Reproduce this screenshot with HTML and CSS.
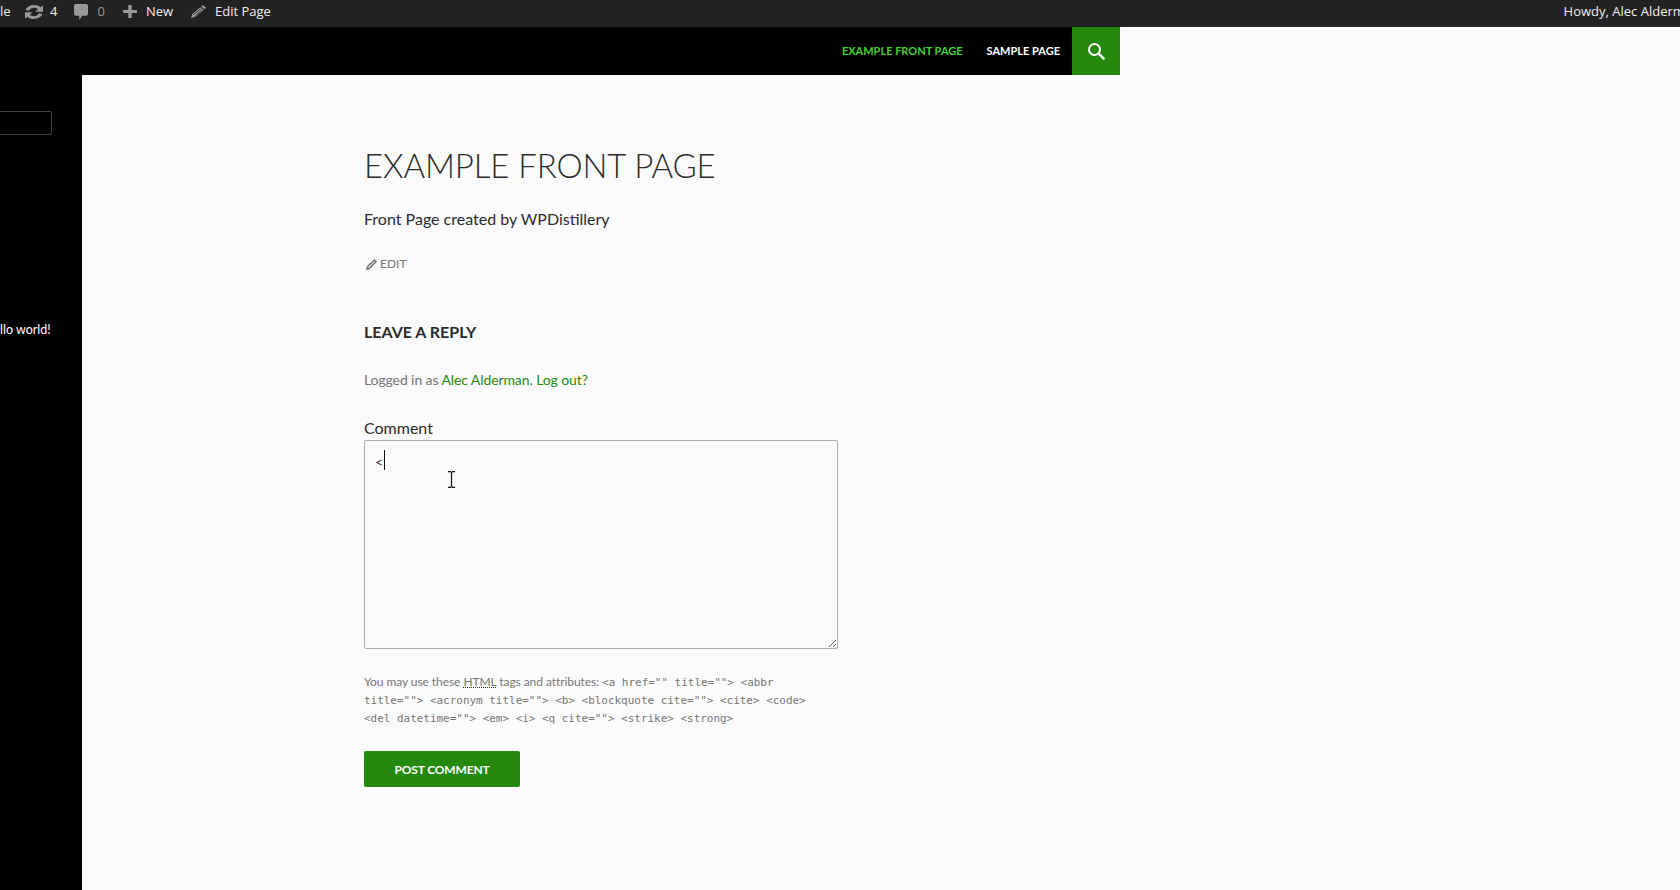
FILE: index.html
```html
<!DOCTYPE html>
<html lang="en">
<head>
  <meta charset="UTF-8">
  <title>Example Front Page</title>
  <link rel="stylesheet" href="styles.css">
</head>
<body>
  <div class="adminbar">
    <div class="adminbar-left">
      <a class="bar-item bar-site">le</a>
      <a class="bar-item bar-updates">
        <svg class="icon-updates" viewBox="2.800 3.300 14.400 13.400" preserveAspectRatio="none"><path d="M10.200 3.300c2 0 3.800.8 5 2.200l2-2v6.200h-6.200l2.300-2.300c-.8-.9-1.900-1.400-3.100-1.400-1.900 0-3.500 1.200-4.100 2.900L3.200 8c1-2.700 3.800-4.700 7-4.700zM2.800 10.300H9l-2.300 2.300c.8.900 1.900 1.400 3.100 1.400 1.900 0 3.500-1.200 4.100-2.900l2.900.9c-1 2.700-3.800 4.700-7 4.700-2 0-3.800-.8-5-2.200l-2 2v-6.200z"/></svg>
        4
      </a>
      <a class="bar-item bar-comments">
        <svg class="icon-comments" viewBox="2 3 16 15" preserveAspectRatio="none"><path d="M4 3h12c1.100 0 2 .9 2 2v7c0 1.100-.9 2-2 2h-4.500l-3.500 4v-4H4c-1.100 0-2-.9-2-2V5c0-1.100.9-2 2-2z"/></svg>
        0
      </a>
      <a class="bar-item bar-new">
        <svg class="icon-new" viewBox="3 3 14 14" preserveAspectRatio="none"><path d="M17 8.300v3.400h-5.300V17H8.300v-5.300H3V8.300h5.300V3h3.400v5.300z"/></svg>
        New
      </a>
      <a class="bar-item bar-edit">
        <svg class="icon-edit" viewBox="2 2 16 16" preserveAspectRatio="none"><path d="M14.600 2l3.400 3.400-1.700 1.700-3.400-3.400zM11.900 4.700l3.400 3.400-8.700 8.400L2 18l1.300-4.700z"/><path d="M5 13.800l7.500-7.500M6.800 15l7-7" stroke="#222" stroke-width=".9"/></svg>
        Edit Page
      </a>
    </div>
    <a class="bar-account">Howdy, Alec Alderman</a>
  </div>

  <div class="navbar">
    <ul class="nav-menu">
      <li><a class="current" href="#">Example Front Page</a></li>
      <li><a href="#">Sample Page</a></li>
    </ul>
    <button class="search-toggle">
      <svg viewBox="0 0 20 20" width="20" height="20"><circle cx="8.500" cy="8.500" r="5.500" fill="none" stroke="#fff" stroke-width="2"/><path d="M12.700 12.700l5 5" stroke="#fff" stroke-width="2.400" stroke-linecap="round"/></svg>
    </button>
  </div>

  <div class="page">
    <aside class="sidebar">
      <input class="sidebar-search" type="text">
      <a class="sidebar-link" href="#">llo world!</a>
    </aside>

    <main class="content">
      <h1 class="entry-title">Example Front Page</h1>
      <p class="entry-text">Front Page created by WPDistillery</p>
      <a class="edit-link" href="#">
        <svg viewBox="2 2 16 16" width="11" height="11"><path d="M14 3.500l2.500 2.500L7 15.500l-3.800 1.300L4.500 13z" fill="none" stroke="#767676" stroke-width="2.200"/><path d="M7 11.500l5-5M9 13l5-5" stroke="#767676" stroke-width="1.100"/></svg>
        Edit
      </a>

      <h3 class="reply-title">Leave a Reply</h3>
      <p class="logged-in">Logged in as <a href="#">Alec Alderman</a><a href="#">. Log out?</a></p>

      <form class="comment-form">
        <label class="comment-label" for="comment">Comment</label>
        <div class="comment-wrap">
          <textarea id="comment" class="comment-box">&lt;</textarea>
          <span class="text-caret"></span>
          <svg class="ibeam" viewBox="0 0 9 17" width="9" height="17"><path d="M1 .6h2.500l1 1 1-1H8M1 16.400h2.500l1-1 1 1H8M4.500 1.600v13.800" fill="none" stroke="#111" stroke-width="1.200"/></svg>
        </div>
        <p class="allowed-tags">You may use these <abbr title="HyperText Markup Language">HTML</abbr> tags and attributes: <code>&lt;a href="" title=""&gt; &lt;abbr title=""&gt; &lt;acronym title=""&gt; &lt;b&gt; &lt;blockquote cite=""&gt; &lt;cite&gt; &lt;code&gt; &lt;del datetime=""&gt; &lt;em&gt; &lt;i&gt; &lt;q cite=""&gt; &lt;strike&gt; &lt;strong&gt;</code></p>
        <button class="submit" type="button">Post Comment</button>
      </form>
    </main>
  </div>
</body>
</html>
```

FILE: styles.css
```css
html, body {
  height: 100%;
}
body {
  margin: 0;
  background: #fbfbfb;
  color: #2b2b2b;
  font-family: Lato, sans-serif;
  display: flex;
  flex-direction: column;
  overflow: hidden;
}
a {
  text-decoration: none;
  color: inherit;
}

.adminbar {
  height: 27px;
  flex: none;
  background: #222;
  color: #eee;
  font-family: "Open Sans", sans-serif;
  font-size: 13px;
  line-height: 23px;
  display: flex;
  justify-content: space-between;
  white-space: nowrap;
  overflow: hidden;
}
.adminbar-left {
  display: flex;
  align-items: flex-start;
}
.bar-item {
  display: flex;
  align-items: center;
  height: 23px;
}
.bar-item svg {
  fill: #999;
  flex: none;
  margin-right: 9px;
}
.bar-site {
  width: 25px;
}
.bar-updates {
  margin-right: 17px;
}
.icon-updates {
  width: 18px;
  height: 14px;
  margin-right: 7px !important;
}
.bar-comments {
  margin-right: 18px;
  color: #999;
}
.icon-comments {
  width: 14px;
  height: 16px;
}
.bar-new {
  margin-right: 18px;
}
.icon-new {
  width: 14px;
  height: 13px;
}
.icon-edit {
  width: 15px;
  height: 13px;
}
.bar-account {
  margin-left: auto;
  padding-left: 20px;
  margin-right: -20px;
}

.navbar {
  width: 1120px;
  height: 48px;
  flex: none;
  background: #000;
  display: flex;
  justify-content: flex-end;
}
.nav-menu {
  list-style: none;
  margin: 0;
  padding: 0;
  display: flex;
}
.nav-menu a {
  display: block;
  padding: 0 12px;
  color: #fff;
  font-size: 11px;
  font-weight: 700;
  line-height: 48px;
  text-transform: uppercase;
}
.nav-menu a.current {
  color: #41d12e;
}
.search-toggle {
  width: 48px;
  height: 48px;
  padding: 0;
  border: 0;
  background: #24890d;
  display: flex;
  align-items: center;
  justify-content: center;
}

.page {
  flex: 1;
  display: flex;
  min-height: 0;
}
.sidebar {
  width: 82px;
  flex: none;
  background: #000;
  color: #fff;
}
.sidebar-search {
  display: block;
  box-sizing: border-box;
  width: 152px;
  height: 24px;
  margin: 36px 0 0 -100px;
  border: 1px solid #444;
  border-radius: 2px;
  background: transparent;
}
.sidebar-link {
  display: block;
  margin-top: 186px;
  font-size: 12.500px;
  line-height: 18px;
}

.content {
  width: 474px;
  margin-left: 282px;
}
.entry-title {
  margin: 70px 0 0;
  font-size: 33px;
  font-weight: 300;
  line-height: 40px;
  letter-spacing: -0.12px;
  text-transform: uppercase;
  color: #2b2b2b;
}
.entry-text {
  margin: 22px 0 0;
  font-size: 16px;
  line-height: 24px;
}
.edit-link {
  display: flex;
  align-items: center;
  gap: 3px;
  margin: 24px 0 0 2px;
  color: #767676;
  font-size: 12px;
  line-height: 18px;
  text-transform: uppercase;
}
.reply-title {
  margin: 47px 0 0;
  font-size: 16px;
  font-weight: 700;
  line-height: 24px;
  text-transform: uppercase;
}
.logged-in {
  margin: 24px 0 0;
  color: #767676;
  font-size: 14px;
  line-height: 24px;
  letter-spacing: -0.1px;
}
.logged-in a {
  color: #24890d;
}
.comment-form {
  margin-top: 24px;
}
.comment-label {
  display: block;
  font-size: 16px;
  line-height: 24px;
}
.comment-wrap {
  position: relative;
  height: 209px;
}
.comment-box {
  display: block;
  box-sizing: border-box;
  width: 474px;
  height: 209px;
  margin: 0;
  padding: 9px 10px;
  border: 1px solid rgba(0,0,0,0.3);
  border-radius: 2px;
  background: #fbfbfb;
  color: #2b2b2b;
  font-family: Lato, sans-serif;
  font-size: 14px;
  line-height: 24px;
  outline: none;
}
.text-caret {
  position: absolute;
  left: 20px;
  top: 10px;
  width: 1px;
  height: 20px;
  background: #111;
}
.ibeam {
  position: absolute;
  left: 83px;
  top: 31px;
}
.allowed-tags {
  margin: 24px 0 0;
  color: #767676;
  font-size: 12px;
  line-height: 18px;
  letter-spacing: -0.07px;
}
.allowed-tags abbr {
  text-decoration: underline dotted #2b2b2b;
}
.allowed-tags code {
  font-family: "DejaVu Sans Mono", monospace;
  font-size: 11px;
  line-height: 1;
  letter-spacing: -0.03px;
}
.submit {
  display: block;
  width: 156px;
  height: 36px;
  margin-top: 24px;
  padding: 0;
  border: 0;
  border-radius: 2px;
  background: #24890d;
  color: #fff;
  font-family: Lato, sans-serif;
  font-size: 12px;
  font-weight: 700;
  letter-spacing: -0.15px;
  text-transform: uppercase;
}
```
